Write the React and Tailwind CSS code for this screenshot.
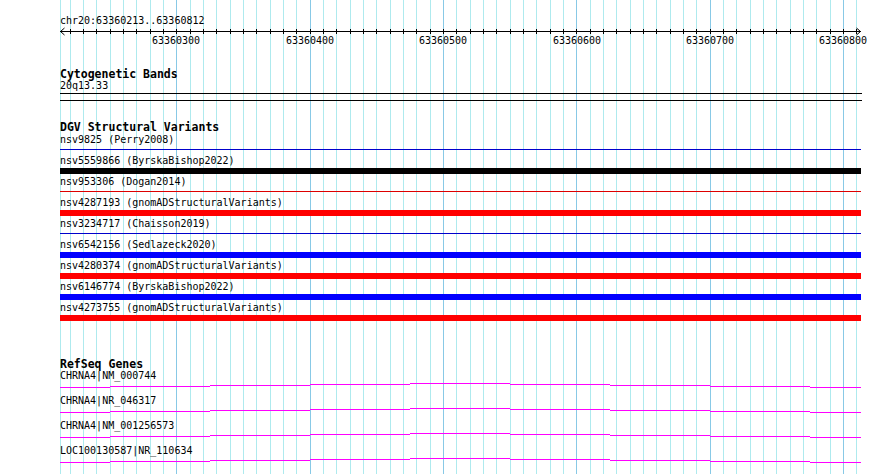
import React from "react";

const mono = "font-['DejaVu_Sans_Mono',monospace]";

// 10bp grid, 600bp over 800px
const grid = Array.from({ length: 60 }, (_, k) => ({
  x: Math.floor(70 + (k * 40) / 3) + 0.5,
  major: (k - 8) % 10 === 0,
}));

const labels = [
  { x: 176, text: "63360300" },
  { x: 310, text: "63360400" },
  { x: 443, text: "63360500" },
  { x: 577, text: "63360600" },
  { x: 710, text: "63360700" },
  { x: 843, text: "63360800" },
];

const variants = [
  { label: "nsv9825 (Perry2008)", thick: false, color: "bg-[#0000cc]" },
  { label: "nsv5559866 (ByrskaBishop2022)", thick: true, color: "bg-black" },
  { label: "nsv953306 (Dogan2014)", thick: false, color: "bg-[#dd0000]" },
  { label: "nsv4287193 (gnomADStructuralVariants)", thick: true, color: "bg-[#ff0000]" },
  { label: "nsv3234717 (Chaisson2019)", thick: false, color: "bg-[#0000cc]" },
  { label: "nsv6542156 (Sedlazeck2020)", thick: true, color: "bg-[#0000ff]" },
  { label: "nsv4280374 (gnomADStructuralVariants)", thick: true, color: "bg-[#ff0000]" },
  { label: "nsv6146774 (ByrskaBishop2022)", thick: true, color: "bg-[#0000ff]" },
  { label: "nsv4273755 (gnomADStructuralVariants)", thick: true, color: "bg-[#ff0000]" },
];

const genes = [
  "CHRNA4|NM_000744",
  "CHRNA4|NR_046317",
  "CHRNA4|NM_001256573",
  "LOC100130587|NR_110634",
];

// stepped gene line, x relative to track start (60)
const steps = [
  [0, 50, 5],
  [50, 150, 4],
  [150, 250, 3],
  [250, 350, 2],
  [350, 450, 1],
  [450, 550, 2],
  [550, 650, 3],
  [650, 750, 4],
  [750, 801, 5],
];

function Ruler() {
  return (
    <svg width="890" height="20" className={`block ${mono}`}>
      <line x1="60" y1="4.5" x2="861" y2="4.5" stroke="#000" strokeWidth="1" />
      <polyline points="64.5,1 60.5,4.5 64.5,8" fill="none" stroke="#000" strokeWidth="1" />
      <polyline points="856.5,1 860.5,4.5 856.5,8" fill="none" stroke="#000" strokeWidth="1" />
      {grid.map((g, i) => (
        <line key={i} x1={g.x} y1="2" x2={g.x} y2="7" stroke="#000" strokeWidth="1" />
      ))}
      {labels.map((l) => (
        <text key={l.text} x={l.x} y="17" textAnchor="middle" fontSize="10" fill="#000">
          {l.text}
        </text>
      ))}
    </svg>
  );
}

function VariantRow({ label, thick, color }) {
  return (
    <div>
      <div className="h-[13px] leading-[13px] pl-[60px] text-[10px] whitespace-pre">{label}</div>
      <div className={`h-[8px] ml-[60px] w-[801px] ${thick ? "pt-[1px]" : "pt-[3px]"}`}>
        <div className={`w-full ${thick ? "h-[6px]" : "h-[1px]"} ${color}`} />
      </div>
    </div>
  );
}

function GeneRow({ label }) {
  return (
    <div>
      <div className="h-[12px] leading-[12px] pl-[60px] text-[10px] whitespace-pre">{label}</div>
      <svg width="801" height="13" className="block ml-[60px]">
        {steps.map(([x0, x1, y], i) => (
          <line key={i} x1={x0} y1={y + 0.5} x2={x1} y2={y + 0.5} stroke="#ff00ff" strokeWidth="1" />
        ))}
      </svg>
    </div>
  );
}

export default function App() {
  return (
    <div className={`relative w-[890px] h-[474px] overflow-hidden bg-white text-black ${mono}`}>
      {/* grid background */}
      <svg width="890" height="474" className="absolute inset-0">
        <line x1="60.5" y1="0" x2="60.5" y2="474" stroke="#aeeaee" strokeWidth="1" />
        {grid.map((g, i) => (
          <line
            key={i}
            x1={g.x}
            y1="0"
            x2={g.x}
            y2="474"
            stroke={g.major ? "#88c9e6" : "#aeeaee"}
            strokeWidth="1"
          />
        ))}
      </svg>

      <div className="relative">
        {/* location + ruler */}
        <div className="pt-[15px] h-[27px] leading-[12px] pl-[60px] text-[10px]">chr20:63360213..63360812</div>
        <Ruler />

        {/* Cytogenetic Bands */}
        <div className="mt-[21px] h-[12px] leading-[12px] pl-[60px] text-[11.5px] font-bold">Cytogenetic Bands</div>
        <div className="h-[12px] leading-[12px] pl-[60px] text-[10px]">20q13.33</div>
        <div className="mt-[1px] ml-[60px] w-[802px] h-[8px] border-y border-black" />

        {/* DGV Structural Variants */}
        <div className="mt-[20px] h-[12px] leading-[12px] pl-[60px] text-[11.5px] font-bold">DGV Structural Variants</div>
        {variants.map((v) => (
          <VariantRow key={v.label} {...v} />
        ))}

        {/* RefSeq Genes */}
        <div className="mt-[36px] h-[12px] leading-[12px] pl-[60px] text-[11.5px] font-bold">RefSeq Genes</div>
        {genes.map((g) => (
          <GeneRow key={g} label={g} />
        ))}
      </div>
    </div>
  );
}
